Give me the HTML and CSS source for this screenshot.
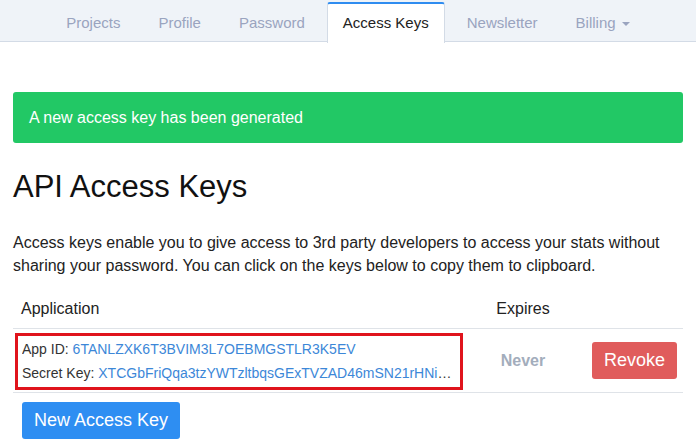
FILE: index.html
```html
<!DOCTYPE html>
<html>
<head>
<meta charset="utf-8">
<link rel="stylesheet" href="styles.css">
</head>
<body>
<nav class="tabs">
  <ul class="tab-list">
    <li class="tab">Projects</li>
    <li class="tab">Profile</li>
    <li class="tab">Password</li>
    <li class="tab active">Access Keys</li>
    <li class="tab">Newsletter</li>
    <li class="tab">Billing <span class="caret"></span></li>
  </ul>
</nav>
<main class="container">
  <div class="alert">A new access key has been generated</div>
  <h1 class="title">API Access Keys</h1>
  <p class="intro">Access keys enable you to give access to 3rd party developers to access your stats without sharing your password. You can click on the keys below to copy them to clipboard.</p>
  <table class="keys">
    <thead>
      <tr>
        <th class="col-app">Application</th>
        <th class="col-exp">Expires</th>
        <th class="col-act"></th>
      </tr>
    </thead>
    <tbody>
      <tr>
        <td class="cell-app">
          <div class="keybox">
            <div class="keyline">App ID: <a class="key">6TANLZXK6T3BVIM3L7OEBMGSTLR3K5EV</a></div>
            <div class="keyline">Secret Key: <a class="key">XTCGbFriQqa3tzYWTzltbqsGExTVZAD46mSN21rHNiPq8sWkLm3T</a></div>
          </div>
        </td>
        <td class="cell-exp">Never</td>
        <td class="cell-act"><button class="btn btn-red">Revoke</button></td>
      </tr>
    </tbody>
  </table>
  <button class="btn btn-blue new-key">New Access Key</button>
</main>
</body>
</html>
```

FILE: styles.css
```css
html, body {
  margin: 0;
  padding: 0;
  background: #fff;
}
body {
  font-family: "Liberation Sans", Arial, sans-serif;
  color: #222;
  font-size: 16px;
}
.tabs {
  background: #eff3f8;
  border-bottom: 1px solid #d3dbe6;
  height: 41px;
}
.tab-list {
  list-style: none;
  margin: 0;
  padding: 2px 0 0;
  display: flex;
  justify-content: center;
  gap: 6px;
}
.tab {
  font-size: 15px;
  line-height: 17px;
  padding: 10px 15px 12px;
  color: #9aa4bf;
  border: 1px solid transparent;
  border-top-width: 2px;
  border-bottom: 0;
  height: 40px;
  box-sizing: border-box;
}
.tab.active {
  background: #fff;
  color: #222;
  border-color: #d3dbe6;
  border-top-color: #2f8cf0;
  border-radius: 3px 3px 0 0;
  height: 41px;
}
.caret {
  display: inline-block;
  width: 0;
  height: 0;
  margin-left: 2px;
  vertical-align: middle;
  border-top: 4px solid #9aa4bf;
  border-left: 4px solid transparent;
  border-right: 4px solid transparent;
}
.container {
  padding: 50px 13px 0;
}
.alert {
  background: #22c865;
  color: #fff;
  border-radius: 3px;
  padding: 14px 16px;
  line-height: 23px;
  font-size: 16px;
}
.title {
  font-size: 31px;
  font-weight: normal;
  line-height: 33px;
  margin: 27px 0 0;
  color: #111;
}
.intro {
  margin: 28px 0 12px;
  line-height: 23px;
  color: #222;
}
.keys {
  width: 100%;
  border-collapse: collapse;
}
.keys th {
  font-weight: normal;
  text-align: left;
  padding: 8px;
  line-height: 23px;
  border-bottom: 1px solid #dfe3e8;
  color: #222;
}
.keys th.col-app { width: 441px; }
.keys th.col-exp { width: 90px; text-align: center; }
.keys td {
  border-bottom: 1px solid #dfe3e8;
  vertical-align: middle;
}
.cell-app {
  padding: 4px 7px 2px 2px;
}
.keybox {
  border: 3px solid #e0141c;
  padding: 1px 4px 2px 4px;
  width: 434px;
  font-size: 14px;
  color: #333;
}
.keyline {
  line-height: 24px;
  white-space: nowrap;
  overflow: hidden;
  text-overflow: ellipsis;
}
.key {
  color: #3c87d8;
  text-decoration: none;
}
.cell-exp {
  text-align: center;
  font-weight: bold;
  color: #a3adbc;
  padding: 0 8px;
}
.cell-act {
  text-align: right;
  padding: 0 6px 0 0;
}
.btn {
  font-family: "Liberation Sans", Arial, sans-serif;
  font-size: 18px;
  line-height: 21px;
  padding: 8px 12px;
  border: 0;
  border-radius: 3px;
  color: #fff;
  cursor: pointer;
}
.btn-red {
  background: #e05c5c;
}
.btn-blue {
  background: #2e8ef2;
}
.new-key {
  margin: 9px 0 0 9px;
}
```
